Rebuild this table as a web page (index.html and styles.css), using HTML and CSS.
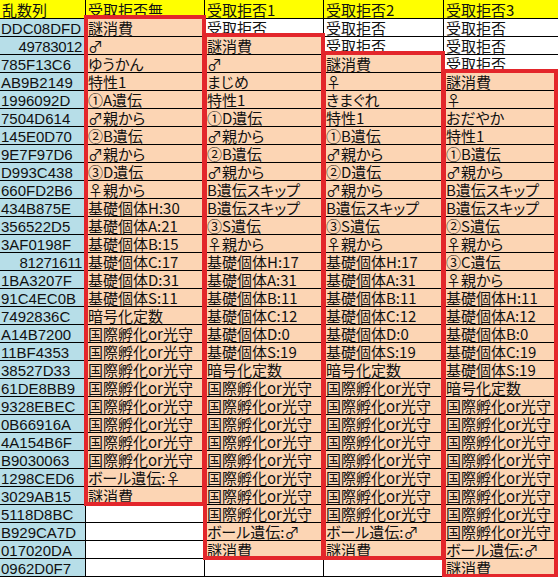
FILE: index.html
```html
<!DOCTYPE html>
<html lang="ja">
<head>
<meta charset="utf-8">
<title>乱数列</title>
<link rel="stylesheet" href="styles.css">
</head>
<body>
<div class="sheet">
  <div class="grid">
    <div class="c h">乱数列</div><div class="c h">受取拒否無</div><div class="c h">受取拒否1</div><div class="c h">受取拒否2</div><div class="c h">受取拒否3</div>

    <div class="c a">DDC08DFD</div><div class="c o">謎消費</div><div class="c">受取拒否</div><div class="c">受取拒否</div><div class="c">受取拒否</div>
    <div class="c a n">49783012</div><div class="c o">♂</div><div class="c o">謎消費</div><div class="c">受取拒否</div><div class="c">受取拒否</div>
    <div class="c a">785F13C6</div><div class="c o">ゆうかん</div><div class="c o">♂</div><div class="c o">謎消費</div><div class="c">受取拒否</div>
    <div class="c a">AB9B2149</div><div class="c o">特性1</div><div class="c o">まじめ</div><div class="c o">♀</div><div class="c o">謎消費</div>
    <div class="c a">1996092D</div><div class="c o">①A遺伝</div><div class="c o">特性1</div><div class="c o">きまぐれ</div><div class="c o">♀</div>
    <div class="c a">7504D614</div><div class="c o">♂親から</div><div class="c o">①D遺伝</div><div class="c o">特性1</div><div class="c o">おだやか</div>
    <div class="c a">145E0D70</div><div class="c o">②B遺伝</div><div class="c o">♂親から</div><div class="c o">①B遺伝</div><div class="c o">特性1</div>
    <div class="c a">9E7F97D6</div><div class="c o">♂親から</div><div class="c o">②B遺伝</div><div class="c o">♂親から</div><div class="c o">①B遺伝</div>
    <div class="c a">D993C438</div><div class="c o">③D遺伝</div><div class="c o">♂親から</div><div class="c o">②D遺伝</div><div class="c o">♂親から</div>
    <div class="c a">660FD2B6</div><div class="c o">♀親から</div><div class="c o">B遺伝スキップ</div><div class="c o">♂親から</div><div class="c o">B遺伝スキップ</div>
    <div class="c a">434B875E</div><div class="c o">基礎個体H:30</div><div class="c o">B遺伝スキップ</div><div class="c o">B遺伝スキップ</div><div class="c o">B遺伝スキップ</div>
    <div class="c a">356522D5</div><div class="c o">基礎個体A:21</div><div class="c o">③S遺伝</div><div class="c o">③S遺伝</div><div class="c o">②S遺伝</div>
    <div class="c a">3AF0198F</div><div class="c o">基礎個体B:15</div><div class="c o">♀親から</div><div class="c o">♀親から</div><div class="c o">♀親から</div>
    <div class="c a n">81271611</div><div class="c o">基礎個体C:17</div><div class="c o">基礎個体H:17</div><div class="c o">基礎個体H:17</div><div class="c o">③C遺伝</div>
    <div class="c a">1BA3207F</div><div class="c o">基礎個体D:31</div><div class="c o">基礎個体A:31</div><div class="c o">基礎個体A:31</div><div class="c o">♀親から</div>
    <div class="c a">91C4EC0B</div><div class="c o">基礎個体S:11</div><div class="c o">基礎個体B:11</div><div class="c o">基礎個体B:11</div><div class="c o">基礎個体H:11</div>
    <div class="c a">7492836C</div><div class="c o">暗号化定数</div><div class="c o">基礎個体C:12</div><div class="c o">基礎個体C:12</div><div class="c o">基礎個体A:12</div>
    <div class="c a">A14B7200</div><div class="c o">国際孵化or光守</div><div class="c o">基礎個体D:0</div><div class="c o">基礎個体D:0</div><div class="c o">基礎個体B:0</div>
    <div class="c a">11BF4353</div><div class="c o">国際孵化or光守</div><div class="c o">基礎個体S:19</div><div class="c o">基礎個体S:19</div><div class="c o">基礎個体C:19</div>
    <div class="c a">38527D33</div><div class="c o">国際孵化or光守</div><div class="c o">暗号化定数</div><div class="c o">暗号化定数</div><div class="c o">基礎個体S:19</div>
    <div class="c a">61DE8BB9</div><div class="c o">国際孵化or光守</div><div class="c o">国際孵化or光守</div><div class="c o">国際孵化or光守</div><div class="c o">暗号化定数</div>
    <div class="c a">9328EBEC</div><div class="c o">国際孵化or光守</div><div class="c o">国際孵化or光守</div><div class="c o">国際孵化or光守</div><div class="c o">国際孵化or光守</div>
    <div class="c a">0B66916A</div><div class="c o">国際孵化or光守</div><div class="c o">国際孵化or光守</div><div class="c o">国際孵化or光守</div><div class="c o">国際孵化or光守</div>
    <div class="c a">4A154B6F</div><div class="c o">国際孵化or光守</div><div class="c o">国際孵化or光守</div><div class="c o">国際孵化or光守</div><div class="c o">国際孵化or光守</div>
    <div class="c a">B9030063</div><div class="c o">国際孵化or光守</div><div class="c o">国際孵化or光守</div><div class="c o">国際孵化or光守</div><div class="c o">国際孵化or光守</div>
    <div class="c a">1298CED6</div><div class="c o">ボール遺伝:♀</div><div class="c o">国際孵化or光守</div><div class="c o">国際孵化or光守</div><div class="c o">国際孵化or光守</div>
    <div class="c a">3029AB15</div><div class="c o">謎消費</div><div class="c o">国際孵化or光守</div><div class="c o">国際孵化or光守</div><div class="c o">国際孵化or光守</div>
    <div class="c a">5118D8BC</div><div class="c"></div><div class="c o">国際孵化or光守</div><div class="c o">国際孵化or光守</div><div class="c o">国際孵化or光守</div>
    <div class="c a">B929CA7D</div><div class="c"></div><div class="c o">ボール遺伝:♂</div><div class="c o">ボール遺伝:♂</div><div class="c o">国際孵化or光守</div>
    <div class="c a">017020DA</div><div class="c"></div><div class="c o">謎消費</div><div class="c o">謎消費</div><div class="c o">ボール遺伝:♂</div>
    <div class="c a">0962D0F7</div><div class="c"></div><div class="c"></div><div class="c"></div><div class="c o">謎消費</div>
  </div>
  <div class="marks">
    <div class="box box-b"></div>
    <div class="box box-c"></div>
    <div class="box box-d"></div>
    <div class="box box-e"></div>
  </div>
</div>
</body>
</html>
```

FILE: styles.css
```css
html, body {
  margin: 0;
  padding: 0;
  background: #ffffff;
}

.sheet {
  position: relative;
  width: 558px;
  height: 577px;
  overflow: hidden;
}

.grid,
.marks {
  display: grid;
  grid-template-columns: 85px 118px 118px 119px 114px;
  grid-template-rows: 18px repeat(31, 17px);
  gap: 1px;
}

.grid {
  background: #000000;
  border-bottom: 1px solid #000000;
}

.c {
  background: #ffffff;
  color: #111111;
  font-family: "Noto Sans CJK JP", sans-serif;
  font-feature-settings: "palt";
  font-size: 15px;
  line-height: 16px;
  padding: 1px 2px 0 2px;
  white-space: nowrap;
}

.h {
  background: #ffff00;
  padding-top: 2px;
}

.a {
  background: #b7dee8;
  font-family: "Liberation Sans", sans-serif;
  font-size: 15px;
  letter-spacing: 0;
  padding-top: 2px;
  padding-left: 1px;
}

.n {
  text-align: right;
  padding-right: 3px;
  letter-spacing: -0.4px;
}

.o {
  background: #fcd5b4;
}

.marks {
  position: absolute;
  left: 0;
  top: 0;
  pointer-events: none;
}

.box {
  border: 4px solid #e3262b;
  margin: -2px;
}

.box-b { grid-column: 2; grid-row: 2 / 29; margin-top: -4px; }
.box-c { grid-column: 3; grid-row: 3 / 32; margin-top: -4px; }
.box-d { grid-column: 4; grid-row: 4 / 32; margin-top: -4px; }
.box-e { grid-column: 5; grid-row: 5 / 33; margin-top: -4px; margin-right: 0; }
```
